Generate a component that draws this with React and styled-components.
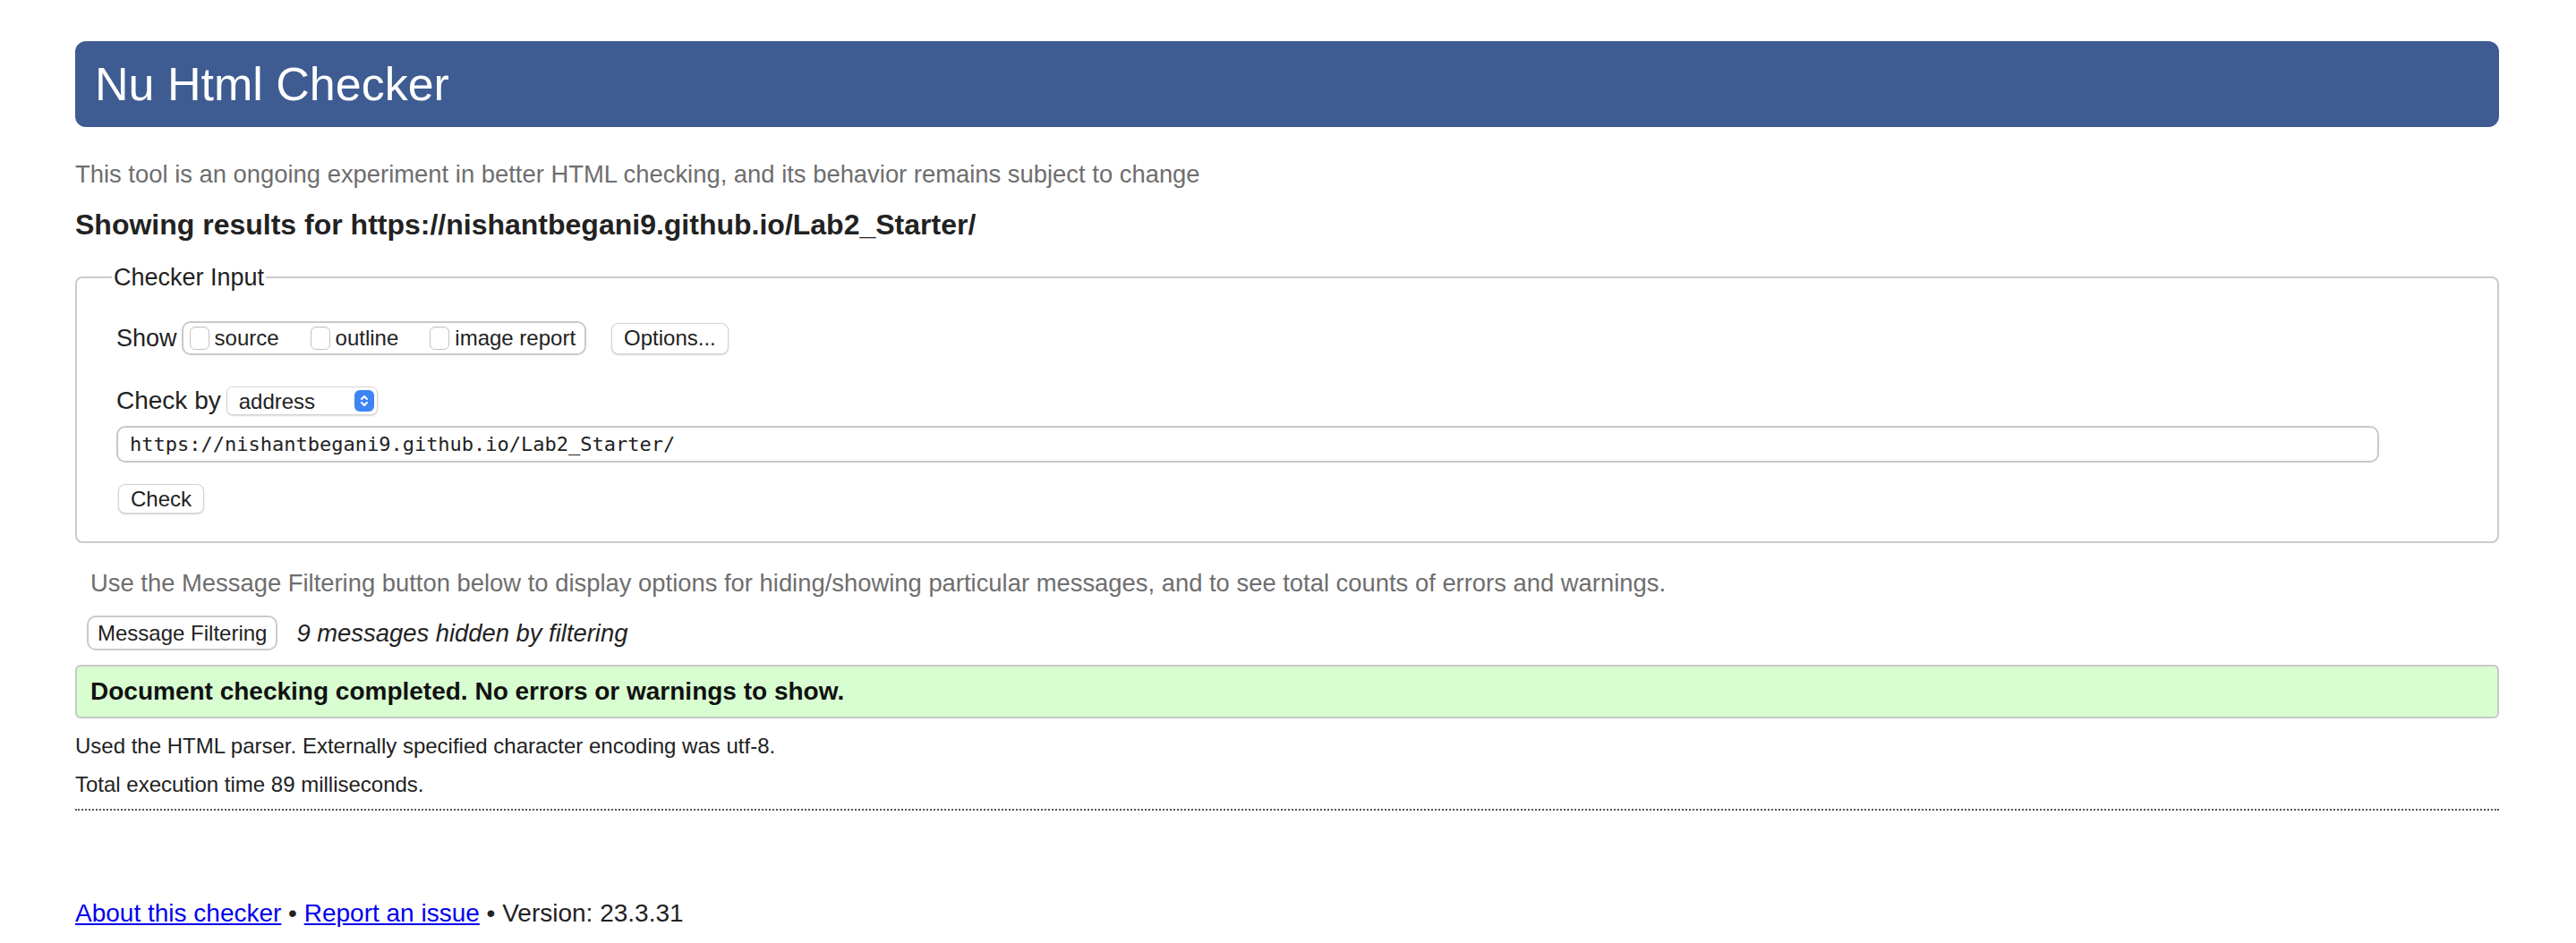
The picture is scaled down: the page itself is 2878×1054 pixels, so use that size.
import React from 'react';
import styled, { createGlobalStyle } from 'styled-components';

const GlobalStyle = createGlobalStyle`
  html, body {
    margin: 0;
    padding: 0;
    background: #fff;
  }
  body {
    font-family: "Liberation Sans", Arial, Helvetica, sans-serif;
    color: #222;
  }
`;

const Page = styled.div`
  padding: 46px 86px 0 84px;
`;

const Banner = styled.h1`
  margin: 0;
  height: 96px;
  line-height: 96px;
  padding-left: 22px;
  background: #3e5c91;
  border-radius: 12px;
  color: #fff;
  font-size: 52px;
  font-weight: normal;
`;

const Note = styled.p`
  margin: ${(p) => p.$top || 0}px 0 0 ${(p) => p.$indent || 0}px;
  font-size: 27.4px;
  line-height: 32px;
  color: #6e6e6e;
`;

const ResultsTitle = styled.h2`
  margin: 21px 0 0;
  font-size: 32px;
  line-height: 38px;
  font-weight: bold;
  color: #222;
`;

const InputBox = styled.fieldset`
  margin: 24px 0 0;
  padding: 33px 0 31px 44px;
  border: 2px solid #cbcbcb;
  border-radius: 8px;
`;

const BoxLegend = styled.legend`
  margin-left: -5px;
  padding: 0 2px;
  font-size: 27px;
  line-height: 32px;
  color: #222;
`;

const Row = styled.div`
  display: flex;
  align-items: center;
  margin-top: ${(p) => p.$top || 0}px;
`;

const RowLabel = styled.span`
  font-size: ${(p) => p.$size || 28}px;
  color: #222;
  margin-right: ${(p) => p.$gap || 6}px;
`;

const CheckGroup = styled.div`
  display: flex;
  align-items: center;
  gap: 35px;
  height: 34px;
  padding: 0 10px 0 7px;
  border: 2px solid #c8c8c8;
  border-radius: 10px;
`;

const CheckLabel = styled.label`
  display: flex;
  align-items: center;
  gap: 6px;
  font-size: 24px;
  color: #222;
`;

const CheckBox = styled.input`
  appearance: none;
  margin: 0;
  width: 22px;
  height: 26px;
  border: 1px solid #c4c4c4;
  border-radius: 6px;
  background: #fff;
  box-shadow: inset 0 1px 1px rgba(0, 0, 0, 0.06);
`;

const Button = styled.button`
  display: inline-flex;
  align-items: center;
  justify-content: center;
  height: ${(p) => p.$h || 33}px;
  padding: 0 ${(p) => p.$pad || 14}px;
  margin-left: ${(p) => p.$left || 0}px;
  background: #fff;
  border: 1px solid #d2d2d2;
  border-radius: 8px;
  box-shadow: 0 1px 2px rgba(0, 0, 0, 0.18);
  font-family: "Liberation Sans", Arial, sans-serif;
  font-size: 24px;
  color: #222;
`;

const FilterButton = styled(Button)`
  border: 2px solid #cbcbcb;
  border-radius: 10px;
  box-shadow: none;
`;

const SelectWrap = styled.div`
  position: relative;
  width: 169px;
  height: 32px;
  box-sizing: border-box;
  border: 1px solid #d4d4d4;
  border-radius: 7px;
  box-shadow: 0 1px 2px rgba(0, 0, 0, 0.15);
  background: #fff;
`;

const Select = styled.select`
  appearance: none;
  width: 100%;
  height: 100%;
  border: none;
  background: transparent;
  padding: 0 0 0 13px;
  font-family: "Liberation Sans", Arial, sans-serif;
  font-size: 24px;
  color: #222;
  outline: none;
`;

const Stepper = styled.span`
  position: absolute;
  top: 3px;
  right: 3px;
  width: 22px;
  height: 24px;
  border-radius: 6px;
  background: #3d85f5;
  display: flex;
  align-items: center;
  justify-content: center;
  pointer-events: none;
`;

const UrlField = styled.input`
  display: block;
  box-sizing: border-box;
  width: 2528px;
  height: 41px;
  margin-top: 12px;
  padding: 0 13px;
  border: 2px solid #c8c8c8;
  border-radius: 10px;
  font-family: "DejaVu Sans Mono", "Liberation Mono", monospace;
  font-size: 22px;
  color: #222;
  outline: none;
`;

const Italic = styled.em`
  margin-left: 21px;
  font-size: 27.4px;
  color: #222;
`;

const SuccessBox = styled.div`
  margin-top: 16px;
  height: 56px;
  display: flex;
  align-items: center;
  padding-left: 15px;
  background: #d7fdd1;
  border: 2px solid #c8c8c8;
  border-radius: 6px;
  font-size: 28px;
  font-weight: bold;
  color: #111;
`;

const Detail = styled.p`
  margin: ${(p) => p.$top}px 0 0;
  font-size: 24px;
  line-height: 28px;
  color: #222;
`;

const Rule = styled.hr`
  margin: 13px 0 0;
  border: none;
  border-top: 2px dotted #555;
  height: 0;
`;

const Footer = styled.p`
  margin: 99px 0 0;
  font-size: 28px;
  line-height: 32px;
  color: #222;
`;

const Link = styled.a`
  color: #0000ee;
  text-decoration: underline;
`;

export default function App() {
  return (
    <>
      <GlobalStyle />
      <Page>
        <Banner>Nu Html Checker</Banner>
        <Note $top={37}>
          This tool is an ongoing experiment in better HTML checking, and its behavior remains subject to change
        </Note>
        <ResultsTitle>Showing results for https://nishantbegani9.github.io/Lab2_Starter/</ResultsTitle>

        <InputBox>
          <BoxLegend>Checker Input</BoxLegend>
          <Row>
            <RowLabel $size={27} $gap={5}>Show</RowLabel>
            <CheckGroup>
              <CheckLabel><CheckBox type="checkbox" />source</CheckLabel>
              <CheckLabel><CheckBox type="checkbox" />outline</CheckLabel>
              <CheckLabel><CheckBox type="checkbox" />image report</CheckLabel>
            </CheckGroup>
            <Button $left={28} $h={35} $pad={13}>Options...</Button>
          </Row>
          <Row $top={35}>
            <RowLabel $gap={6}>Check by</RowLabel>
            <SelectWrap>
              <Select defaultValue="address">
                <option value="address">address</option>
                <option value="file">file upload</option>
                <option value="text">text input</option>
              </Select>
              <Stepper>
                <svg width="12" height="18" viewBox="0 0 12 18" fill="none" stroke="#fff" strokeWidth="2" strokeLinecap="round" strokeLinejoin="round">
                  <path d="M3 7l3-3 3 3" />
                  <path d="M3 11l3 3 3-3" />
                </svg>
              </Stepper>
            </SelectWrap>
          </Row>
          <UrlField defaultValue="https://nishantbegani9.github.io/Lab2_Starter/" />
          <Row $top={24}>
            <Button $left={2} $h={33} $pad={13}>Check</Button>
          </Row>
        </InputBox>

        <Note $top={29} $indent={17}>
          Use the Message Filtering button below to display options for hiding/showing particular messages, and to see total counts of errors and warnings.
        </Note>
        <Row $top={20}>
          <FilterButton $left={13} $h={39} $pad={10}>Message Filtering</FilterButton>
          <Italic>9 messages hidden by filtering</Italic>
        </Row>

        <SuccessBox>Document checking completed. No errors or warnings to show.</SuccessBox>

        <Detail $top={17}>Used the HTML parser. Externally specified character encoding was utf-8.</Detail>
        <Detail $top={15}>Total execution time 89 milliseconds.</Detail>
        <Rule />

        <Footer>
          <Link href="#about">About this checker</Link> • <Link href="#issue">Report an issue</Link> • Version: 23.3.31
        </Footer>
      </Page>
    </>
  );
}
